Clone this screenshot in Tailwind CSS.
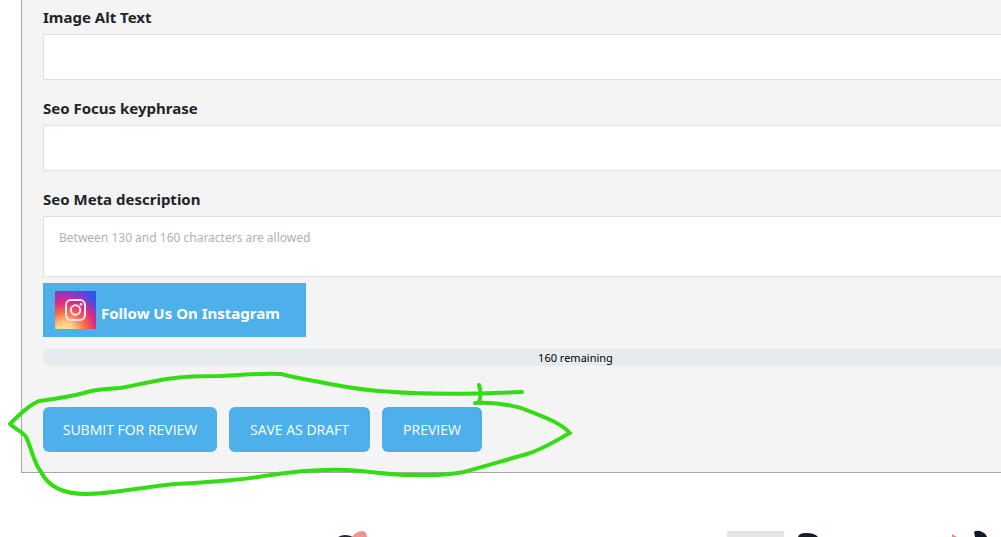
<!DOCTYPE html>
<html lang="en">
<head>
<meta charset="utf-8">
<title>Post submission</title>
<script src="https://cdn.jsdelivr.net/npm/@tailwindcss/browser@4"></script>
</head>
<body class="relative min-h-screen overflow-hidden bg-white font-['Segoe_UI','Noto_Sans',sans-serif] text-[#212529]">
<main class="pl-[21px]">
  <form class="flex flex-col border-b border-l border-[#aaa6a8] bg-[#f4f4f4] pt-[5px] pb-5 pl-[21px]">
    <div class="mb-4 flex flex-col gap-[5px]">
      <label for="alt" class="text-[15px] leading-6 font-bold">Image Alt Text</label>
      <input id="alt" type="text" class="h-[46px] w-full border border-r-0 border-[#e1e1e1] bg-white px-4 text-xs">
    </div>
    <div class="mb-4 flex flex-col gap-[5px]">
      <label for="key" class="text-[15px] leading-6 font-bold">Seo Focus keyphrase</label>
      <input id="key" type="text" class="h-[46px] w-full border border-r-0 border-[#e1e1e1] bg-white px-4 text-xs">
    </div>
    <div class="mb-[6px] flex flex-col gap-[5px]">
      <label for="meta" class="text-[15px] leading-6 font-bold">Seo Meta description</label>
      <textarea id="meta" placeholder="Between 130 and 160 characters are allowed" class="block h-[61px] w-full resize-none border border-r-0 border-[#e1e1e1] bg-white px-[15px] py-3 text-xs leading-[18px] placeholder:text-[#b0b0b0]"></textarea>
    </div>
    <a href="#" class="mb-3 flex h-[54px] items-center gap-[5px] self-start bg-[#4db0eb] pr-[26px] pl-3 text-[15px] font-bold text-white">
      <svg class="h-[38px] w-[41px]" viewBox="0 0 41 38" aria-hidden="true">
        <defs>
          <linearGradient id="sky" x1="0" y1="0.2" x2="1" y2="0">
            <stop offset="0" stop-color="#a52fb8"/><stop offset="0.5" stop-color="#7a3bd0"/><stop offset="1" stop-color="#2358ee"/>
          </linearGradient>
          <radialGradient id="sun" cx="0.25" cy="1.05" r="1.08">
            <stop offset="0" stop-color="#ffe9a0"/><stop offset="0.2" stop-color="#ffd080"/><stop offset="0.45" stop-color="#fb6c47"/><stop offset="0.7" stop-color="#dc2a83"/><stop offset="1" stop-color="#b52db2" stop-opacity="0"/>
          </radialGradient>
        </defs>
        <path d="M0 0h41v38H0z" fill="url(#sky)"/>
        <path d="M0 0h41v38H0z" fill="url(#sun)"/>
        <g fill="none" stroke="#ffe6f2" stroke-width="2">
          <rect x="11" y="9" width="19" height="20" rx="5"/>
          <circle cx="20.5" cy="19" r="4.7"/>
        </g>
        <circle cx="26" cy="13.3" r="1.4" fill="#ffe6f2"/>
      </svg>
      <span class="pt-[6px]">Follow Us On Instagram</span>
    </a>
    <div class="mb-[41px] h-[17px] rounded-l-md bg-[#e6ebee] pl-[107px] text-center text-[11px] leading-[17px] text-black">160 remaining</div>
    <div class="flex gap-3 font-['Segoe_UI','Open_Sans',sans-serif] text-sm text-white">
      <button type="submit" class="h-[45px] w-[174px] rounded-md bg-[#4db0eb]">SUBMIT FOR REVIEW</button>
      <button type="button" class="h-[45px] w-[141px] rounded-md bg-[#4db0eb]">SAVE AS DRAFT</button>
      <button type="button" class="h-[45px] w-[100px] rounded-md bg-[#4db0eb]">PREVIEW</button>
    </div>
  </form>
</main>
<svg class="pointer-events-none absolute top-0 left-0 h-[537px] w-[1001px]" viewBox="0 0 1001 537" aria-hidden="true">
  <path d="M338 537q7-4 15 0z" fill="#20292f"/>
  <path d="M352 537q3-5 10-6 5 0 5 6z" fill="#f79292"/>
  <path d="M727 531h57v6h-57z" fill="#e6e6e6"/>
  <path d="M798 537q1-4 8-4 9 0 12 4z" fill="#151e2c"/>
  <path d="M952 534l5 3h-5z" fill="#ee8b78"/>
  <path d="M974 532q2-2 6-1 6 2 7 6h-12z" fill="#0e1a2b"/>
  <g fill="none" stroke="#34dc16" stroke-width="4" stroke-linecap="round" stroke-linejoin="round">
    <path d="M522 392C455 395 384 394 341 386C320 382 296 378 281 374C260 373 240 375 220 376C205 376 190 376 175 378C150 381 142 384 120 388C108 389 95 389 84 393C69 397 54 399 39 401C29 405 19 415 10 424C16 430 22 431 26 437C32 449 33 461 41 472C48 486 62 494 86 494C111 494 143 487 175 484C202 482 231 482 264 476C296 471 325 469 346 470C368 471 390 475 411 475C429 475 447 476 464 472C486 466 509 459 527 454C544 449 560 438 570 433C560 422 541 416 521 408C503 403 489 402 475 403"/>
    <path d="M479 385C481 391 481 397 479 402"/>
  </g>
</svg>
</body>
</html>
